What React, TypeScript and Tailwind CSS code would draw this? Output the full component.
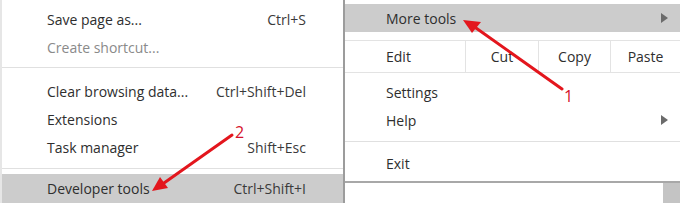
import React from "react";

const font = { fontFamily: '"Open Sans", "Noto Sans", sans-serif' };

function LeftRow({ label, shortcut, muted, highlight }: { label: string; shortcut?: string; muted?: boolean; highlight?: boolean }) {
  return (
    <div className={`flex h-[28px] items-center pl-[45px] pr-[37px] ${highlight ? "bg-[#cccccc]" : ""}`}>
      <span className={`flex-1 ${muted ? "text-[#8a8a8a]" : "text-[#2e2e2e]"}`}>{label}</span>
      {shortcut && <span className="text-[#3a3a3a]">{shortcut}</span>}
    </div>
  );
}

function Tri() {
  return (
    <svg width="7" height="10" viewBox="0 0 7 10" className="mr-[12px]">
      <path d="M0 0 L7 5 L0 10 Z" fill="#6b6b6b" />
    </svg>
  );
}

function RightRow({ label, sub, highlight }: { label: string; sub?: boolean; highlight?: boolean }) {
  return (
    <div className={`flex h-[28px] items-center pl-[41px] ${highlight ? "bg-[#cccccc]" : ""}`}>
      <span className="flex-1 text-[#2e2e2e]">{label}</span>
      {sub && <Tri />}
    </div>
  );
}

export default function App() {
  return (
    <div className="relative flex h-[203px] w-[680px] overflow-hidden bg-white text-[14px]" style={font}>
      {/* left menu */}
      <div className="flex w-[343px] flex-col border-l-[2px] border-[#e6e6e6] pt-[5px]">
        <LeftRow label="Save page as..." shortcut="Ctrl+S" />
        <LeftRow label="Create shortcut..." muted />
        <div className="mt-[6px] mb-[9px] h-px bg-[#e0e0e0]" />
        <LeftRow label="Clear browsing data..." shortcut="Ctrl+Shift+Del" />
        <LeftRow label="Extensions" />
        <LeftRow label="Task manager" shortcut="Shift+Esc" />
        <div className="mt-[7px] mb-[5px] h-px bg-[#e0e0e0]" />
        <div className="flex h-[29px] items-center bg-[#cccccc] pl-[45px] pr-[37px]">
          <span className="flex-1 text-[#2e2e2e]">Developer tools</span>
          <span className="text-[#3a3a3a]">Ctrl+Shift+I</span>
        </div>
      </div>

      {/* right menu */}
      <div className="flex flex-1 flex-col border-l-[2px] border-[#9c9c9c]">
        <div className="flex h-[183px] flex-col border-b-[2px] border-[#a8a8a8] pt-[4px]">
          <RightRow label="More tools" sub highlight />
          <div className="mt-[8px] flex h-[33px] border-y border-[#e3e3e3]">
            <div className="flex w-[120px] items-center pl-[41px] text-[#2e2e2e]">Edit</div>
            <div className="flex w-[73px] items-center justify-center border-l border-[#e3e3e3] text-[#2e2e2e]">Cut</div>
            <div className="flex w-[72px] items-center justify-center border-l border-[#e3e3e3] text-[#2e2e2e]">Copy</div>
            <div className="flex flex-1 items-center justify-center border-l border-[#e3e3e3] text-[#2e2e2e]">Paste</div>
          </div>
          <div className="mt-[5px]" />
          <RightRow label="Settings" />
          <RightRow label="Help" sub />
          <div className="mt-[7px] mb-[7px] h-px bg-[#e0e0e0]" />
          <RightRow label="Exit" />
        </div>
        <div className="flex flex-1">
          <div className="flex-1 bg-white" />
          <div className="w-[17px] bg-[#c4c4c4]" />
        </div>
      </div>

      {/* annotations */}
      <svg className="pointer-events-none absolute left-0 top-0" width="680" height="203" viewBox="0 0 680 203">
        <line x1="562" y1="89" x2="476" y2="28" stroke="#e3161d" strokeWidth="3" strokeLinecap="round" />
        <path d="M463 20 L481 22 L472 33 Z" fill="#e3161d" />
        <line x1="232" y1="135" x2="164" y2="183" stroke="#e3161d" strokeWidth="3" strokeLinecap="round" />
        <path d="M152 191 L160 177 L168 188 Z" fill="#e3161d" />
      </svg>
      <span className="absolute left-[564px] top-[88px] text-[16px] leading-none text-[#d6102a]" style={font}>1</span>
      <span className="absolute left-[235px] top-[124px] text-[16px] leading-none text-[#d6102a]" style={font}>2</span>
    </div>
  );
}
